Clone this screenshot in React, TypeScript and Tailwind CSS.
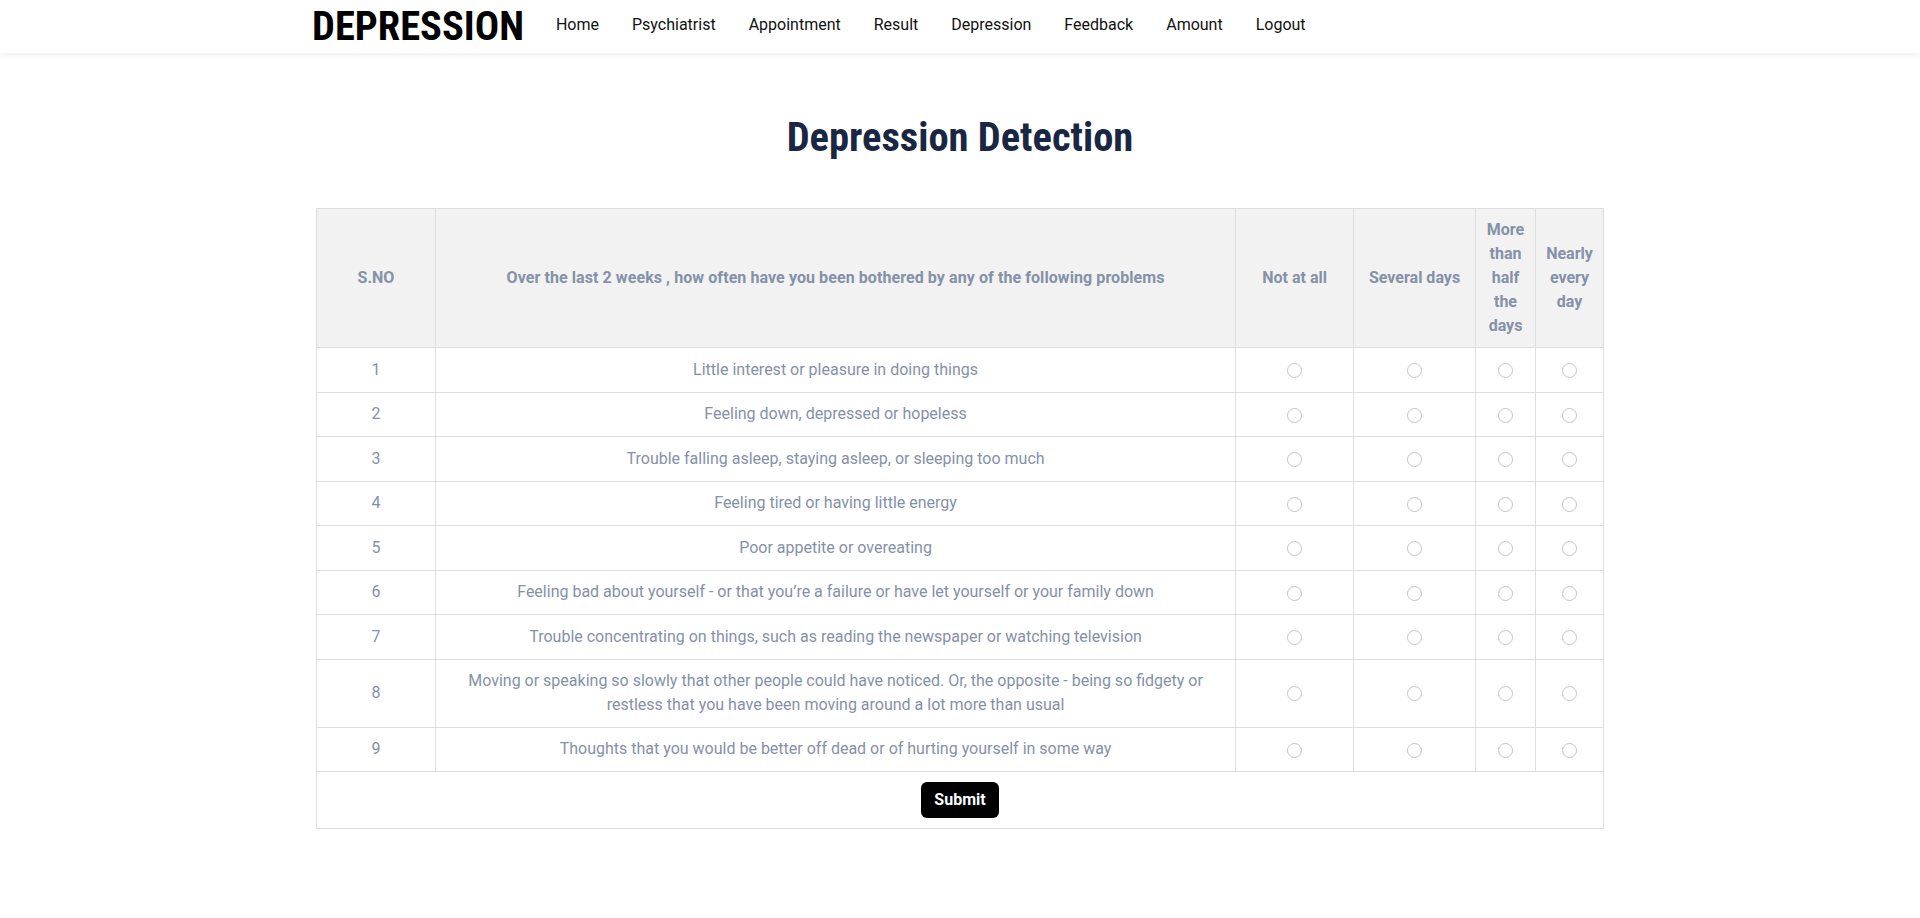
import React from 'react';

const questions = [
  'Little interest or pleasure in doing things',
  'Feeling down, depressed or hopeless',
  'Trouble falling asleep, staying asleep, or sleeping too much',
  'Feeling tired or having little energy',
  'Poor appetite or overeating',
  'Feeling bad about yourself - or that you’re a failure or have let yourself or your family down',
  'Trouble concentrating on things, such as reading the newspaper or watching television',
  'Moving or speaking so slowly that other people could have noticed. Or, the opposite - being so fidgety or restless that you have been moving around a lot more than usual',
  'Thoughts that you would be better off dead or of hurting yourself in some way',
];

const navLinks = ['Home', 'Psychiatrist', 'Appointment', 'Result', 'Depression', 'Feedback', 'Amount', 'Logout'];

const Radio = ({ name }: { name: string }) => (
  <input
    type="radio"
    name={name}
    className="appearance-none w-[15px] h-[15px] rounded-full border border-[#c4c4c4] bg-white align-middle"
  />
);

export default function App() {
  return (
    <div className="min-h-[918px] bg-white font-['Roboto',sans-serif]">
      {/* Navbar */}
      <nav className="h-[53px] bg-white shadow-[0_2px_6px_rgba(0,0,0,0.07)]">
        <div className="w-[1296px] mx-auto flex items-center h-full">
          <span className="font-['Roboto_Condensed','Liberation_Sans_Narrow','Roboto',sans-serif] font-bold text-[40.5px] leading-none text-black mr-[32px]">
            DEPRESSION
          </span>
          <ul className="flex items-center gap-[33px] text-[16px] text-[#111] pb-[4px]">
            {navLinks.map((l) => (
              <li key={l}>
                <a href="#">{l}</a>
              </li>
            ))}
          </ul>
        </div>
      </nav>

      {/* Title */}
      <h1 className="text-center mt-[61px] mb-[48px] font-['Roboto_Condensed','Liberation_Sans_Narrow','Roboto',sans-serif] font-bold text-[40.5px] leading-[46px] text-[#1a2744]">
        Depression Detection
      </h1>

      {/* Questionnaire */}
      <form className="w-[1288px] mx-auto" onSubmit={(e) => e.preventDefault()}>
        <table className="w-full border-collapse border border-[#dedede] text-[16px] text-center text-[#8491a8]">
          <thead className="bg-[#f2f2f2] font-bold leading-6">
            <tr className="h-[139px]">
              <th className="w-[119px] border border-[#dedede] font-bold">S.NO</th>
              <th className="w-[801px] border border-[#dedede] font-bold tracking-[0.08px]">
                Over the last 2 weeks , how often have you been bothered by any of the following problems
              </th>
              <th className="w-[118px] border border-[#dedede] font-bold">Not at all</th>
              <th className="w-[122px] border border-[#dedede] font-bold">Several days</th>
              <th className="w-[60px] border border-[#dedede] font-bold px-1">More than half the days</th>
              <th className="w-[68px] border border-[#dedede] font-bold px-1">Nearly every day</th>
            </tr>
          </thead>
          <tbody className="leading-6">
            {questions.map((q, i) => (
              <tr key={i} className="h-[44.5px]">
                <td className="border border-[#dedede]">{i + 1}</td>
                <td className="border border-[#dedede] px-[22px] py-[9.5px]">{q}</td>
                {[0, 1, 2, 3].map((v) => (
                  <td key={v} className="border border-[#dedede]">
                    <Radio name={`q${i}`} />
                  </td>
                ))}
              </tr>
            ))}
            <tr className="h-[57px]">
              <td colSpan={6} className="border border-[#dedede]">
                <button
                  type="submit"
                  className="bg-black text-white font-bold text-[16px] w-[78px] h-[36px] rounded-[6px] align-middle"
                >
                  Submit
                </button>
              </td>
            </tr>
          </tbody>
        </table>
      </form>
    </div>
  );
}
